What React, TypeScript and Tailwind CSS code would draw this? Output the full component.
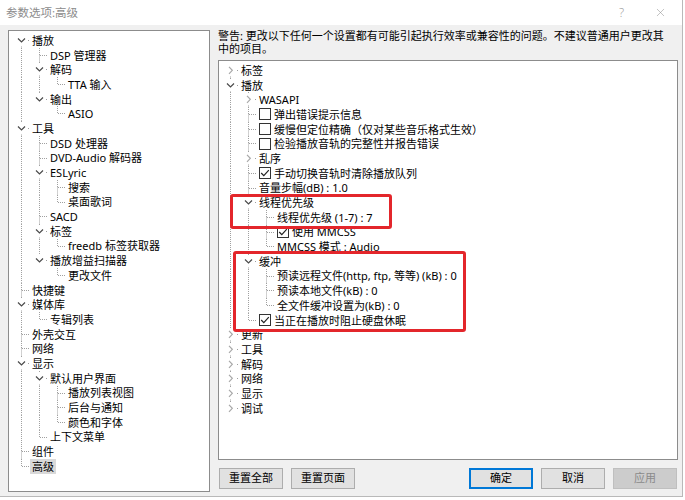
import React from "react";
import { X } from "lucide-react";

type TreeNode = {
  label: string;
  children?: TreeNode[];
  closed?: boolean;
  check?: boolean;
  selected?: boolean;
};

type Row = {
  node: TreeNode;
  level: number;
  guides: boolean[];
  first: boolean;
  last: boolean;
};

const leftTree: TreeNode[] = [
  {
    label: "播放",
    children: [
      { label: "DSP 管理器" },
      { label: "解码", children: [{ label: "TTA 输入" }] },
      { label: "输出", children: [{ label: "ASIO" }] },
    ],
  },
  {
    label: "工具",
    children: [
      { label: "DSD 处理器" },
      { label: "DVD-Audio 解码器" },
      { label: "ESLyric", children: [{ label: "搜索" }, { label: "桌面歌词" }] },
      { label: "SACD" },
      { label: "标签", children: [{ label: "freedb 标签获取器" }] },
      { label: "播放增益扫描器", children: [{ label: "更改文件" }] },
    ],
  },
  { label: "快捷键" },
  { label: "媒体库", children: [{ label: "专辑列表" }] },
  { label: "外壳交互" },
  { label: "网络" },
  {
    label: "显示",
    children: [
      {
        label: "默认用户界面",
        children: [{ label: "播放列表视图" }, { label: "后台与通知" }, { label: "颜色和字体" }],
      },
      { label: "上下文菜单" },
    ],
  },
  { label: "组件" },
  { label: "高级", selected: true },
];

const rightTree: TreeNode[] = [
  { label: "标签", closed: true },
  {
    label: "播放",
    children: [
      { label: "WASAPI", closed: true },
      { label: "弹出错误提示信息", check: false },
      { label: "缓慢但定位精确（仅对某些音乐格式生效）", check: false },
      { label: "检验播放音轨的完整性并报告错误", check: false },
      { label: "乱序", closed: true },
      { label: "手动切换音轨时清除播放队列", check: true },
      { label: "音量步幅(dB) : 1.0" },
      {
        label: "线程优先级",
        children: [
          { label: "线程优先级 (1-7) : 7" },
          { label: "使用 MMCSS", check: true },
          { label: "MMCSS 模式 : Audio" },
        ],
      },
      {
        label: "缓冲",
        children: [
          { label: "预读远程文件(http, ftp, 等等) (kB) : 0" },
          { label: "预读本地文件(kB) : 0" },
          { label: "全文件缓冲设置为(kB) : 0" },
        ],
      },
      { label: "当正在播放时阻止硬盘休眠", check: true },
    ],
  },
  { label: "更新", closed: true },
  { label: "工具", closed: true },
  { label: "解码", closed: true },
  { label: "网络", closed: true },
  { label: "显示", closed: true },
  { label: "调试", closed: true },
];

function flatten(nodes: TreeNode[], level = 0, guides: boolean[] = [], out: Row[] = []) {
  nodes.forEach((node, i) => {
    const last = i === nodes.length - 1;
    out.push({ node, level, guides, first: level === 0 && i === 0, last });
    if (node.children) flatten(node.children, level + 1, [...guides, !last], out);
  });
  return out;
}

const DOT = "#a0a0a0";

const Guide = ({ line }: { line: boolean }) => (
  <svg width="18" height="14.7" className="block shrink-0">
    {line && <line x1="9.5" y1="0" x2="9.5" y2="14.7" stroke={DOT} strokeDasharray="1 1" />}
  </svg>
);

const Connector = ({ row }: { row: Row }) => {
  const toggle = row.node.children ? "open" : row.node.closed ? "closed" : undefined;
  return (
    <svg width="18" height="14.7" className="block shrink-0">
      {!row.first && <line x1="9.5" y1="0" x2="9.5" y2="7.5" stroke={DOT} strokeDasharray="1 1" />}
      {!row.last && <line x1="9.5" y1="7.5" x2="9.5" y2="14.7" stroke={DOT} strokeDasharray="1 1" />}
      <line x1="10" y1="7.5" x2="18" y2="7.5" stroke={DOT} strokeDasharray="1 1" />
      {toggle && <rect x="4" y="2" width="11" height="11" fill="#fff" />}
      {toggle === "open" && (
        <path d="M6 5.5 L9.5 9 L13 5.5" stroke="#4a4a4a" strokeWidth="1.2" fill="none" />
      )}
      {toggle === "closed" && (
        <path d="M8 3.8 L11.3 7.3 L8 10.8" stroke="#a8a8a8" strokeWidth="1.2" fill="none" />
      )}
    </svg>
  );
};

const Checkbox = ({ checked }: { checked: boolean }) => (
  <span className="ml-[2px] flex h-[12px] w-[12px] shrink-0 items-center justify-center border border-[#333333] bg-white">
    {checked && (
      <svg width="10" height="10" viewBox="0 0 10 10">
        <path d="M1.2 5 L3.8 7.6 L8.8 2.2" stroke="#222222" strokeWidth="1.2" fill="none" />
      </svg>
    )}
  </span>
);

const Tree = ({ nodes }: { nodes: TreeNode[] }) => (
  <div className="flex flex-col">
    {flatten(nodes).map((row, i) => (
      <div key={i} className="flex h-[14.7px] items-center">
        {row.guides.map((g, j) => (
          <Guide key={j} line={g} />
        ))}
        <Connector row={row} />
        {row.node.check !== undefined && <Checkbox checked={row.node.check} />}
        <span
          className={
            "flex h-full items-center whitespace-nowrap px-[2px] leading-none " +
            (row.node.check !== undefined ? "ml-[1px] " : "") +
            (row.node.selected ? "bg-[#d9d9d9]" : "")
          }
        >
          {row.node.label}
        </span>
      </div>
    ))}
  </div>
);

const Button = ({ label, primary, disabled }: { label: string; primary?: boolean; disabled?: boolean }) => (
  <div
    className={
      "flex h-[21px] w-[64px] items-center justify-center " +
      (primary
        ? "border-2 border-[#0078d7] bg-[#e1e1e1] text-black"
        : disabled
        ? "border border-[#bfbfbf] bg-[#cccccc] text-[#8a8a8a]"
        : "border border-[#adadad] bg-[#e1e1e1] text-black")
    }
  >
    {label}
  </div>
);

export default function App() {
  return (
    <div className="h-[500px] w-[685px] overflow-hidden bg-white font-['Noto_Sans','Noto_Sans_CJK_SC',sans-serif] text-[11px] text-black">
      <div className="flex h-[497px] w-[683px] flex-col border-b border-r border-[#b9b9b9] bg-[#f0f0f0]">
        {/* Title bar */}
        <div className="flex h-[25px] shrink-0 items-center bg-white pl-[6px] text-[#8c8c8c]">
          <span className="text-[11.5px]">参数选项:高级</span>
          <span className="ml-auto mr-[30px] text-[12px] font-light text-[#a0a0a0]">?</span>
          <X size={13} strokeWidth={1} className="mr-[15px] text-[#909090]" />
        </div>

        <div className="flex gap-[8px] pl-[8px] pt-[5px]">
          {/* Left category tree */}
          <div className="h-[462px] w-[202px] shrink-0 overflow-hidden border border-[#8c8c8c] bg-white pl-[3px] pt-[2px]">
            <Tree nodes={leftTree} />
          </div>

          {/* Right column */}
          <div className="flex w-[460px] flex-col">
            <div className="-mt-[1px] flex h-[25px] flex-col whitespace-nowrap leading-[13px]">
              <span>警告: 更改以下任何一个设置都有可能引起执行效率或兼容性的问题。不建议普通用户更改其</span>
              <span>中的项目。</span>
            </div>
            <div className="relative mt-[6px] h-[400px] overflow-hidden border border-[#8c8c8c] bg-white pl-[2px] pt-[2px]">
              <Tree nodes={rightTree} />
              {/* highlight boxes */}
              <div className="absolute left-[11px] top-[133px] h-[35px] w-[162px] rounded-[3px] border-[3px] border-[#e3262b]" />
              <div className="absolute left-[14px] top-[190px] h-[81px] w-[233px] rounded-[3px] border-[3px] border-[#e3262b]" />
            </div>
            <div className="mt-[8px] flex gap-[8px] pl-[1px] pr-[1px]">
              <Button label="重置全部" />
              <Button label="重置页面" />
              <div className="flex-1" />
              <Button label="确定" primary />
              <Button label="取消" />
              <Button label="应用" disabled />
            </div>
          </div>
        </div>
      </div>
    </div>
  );
}
